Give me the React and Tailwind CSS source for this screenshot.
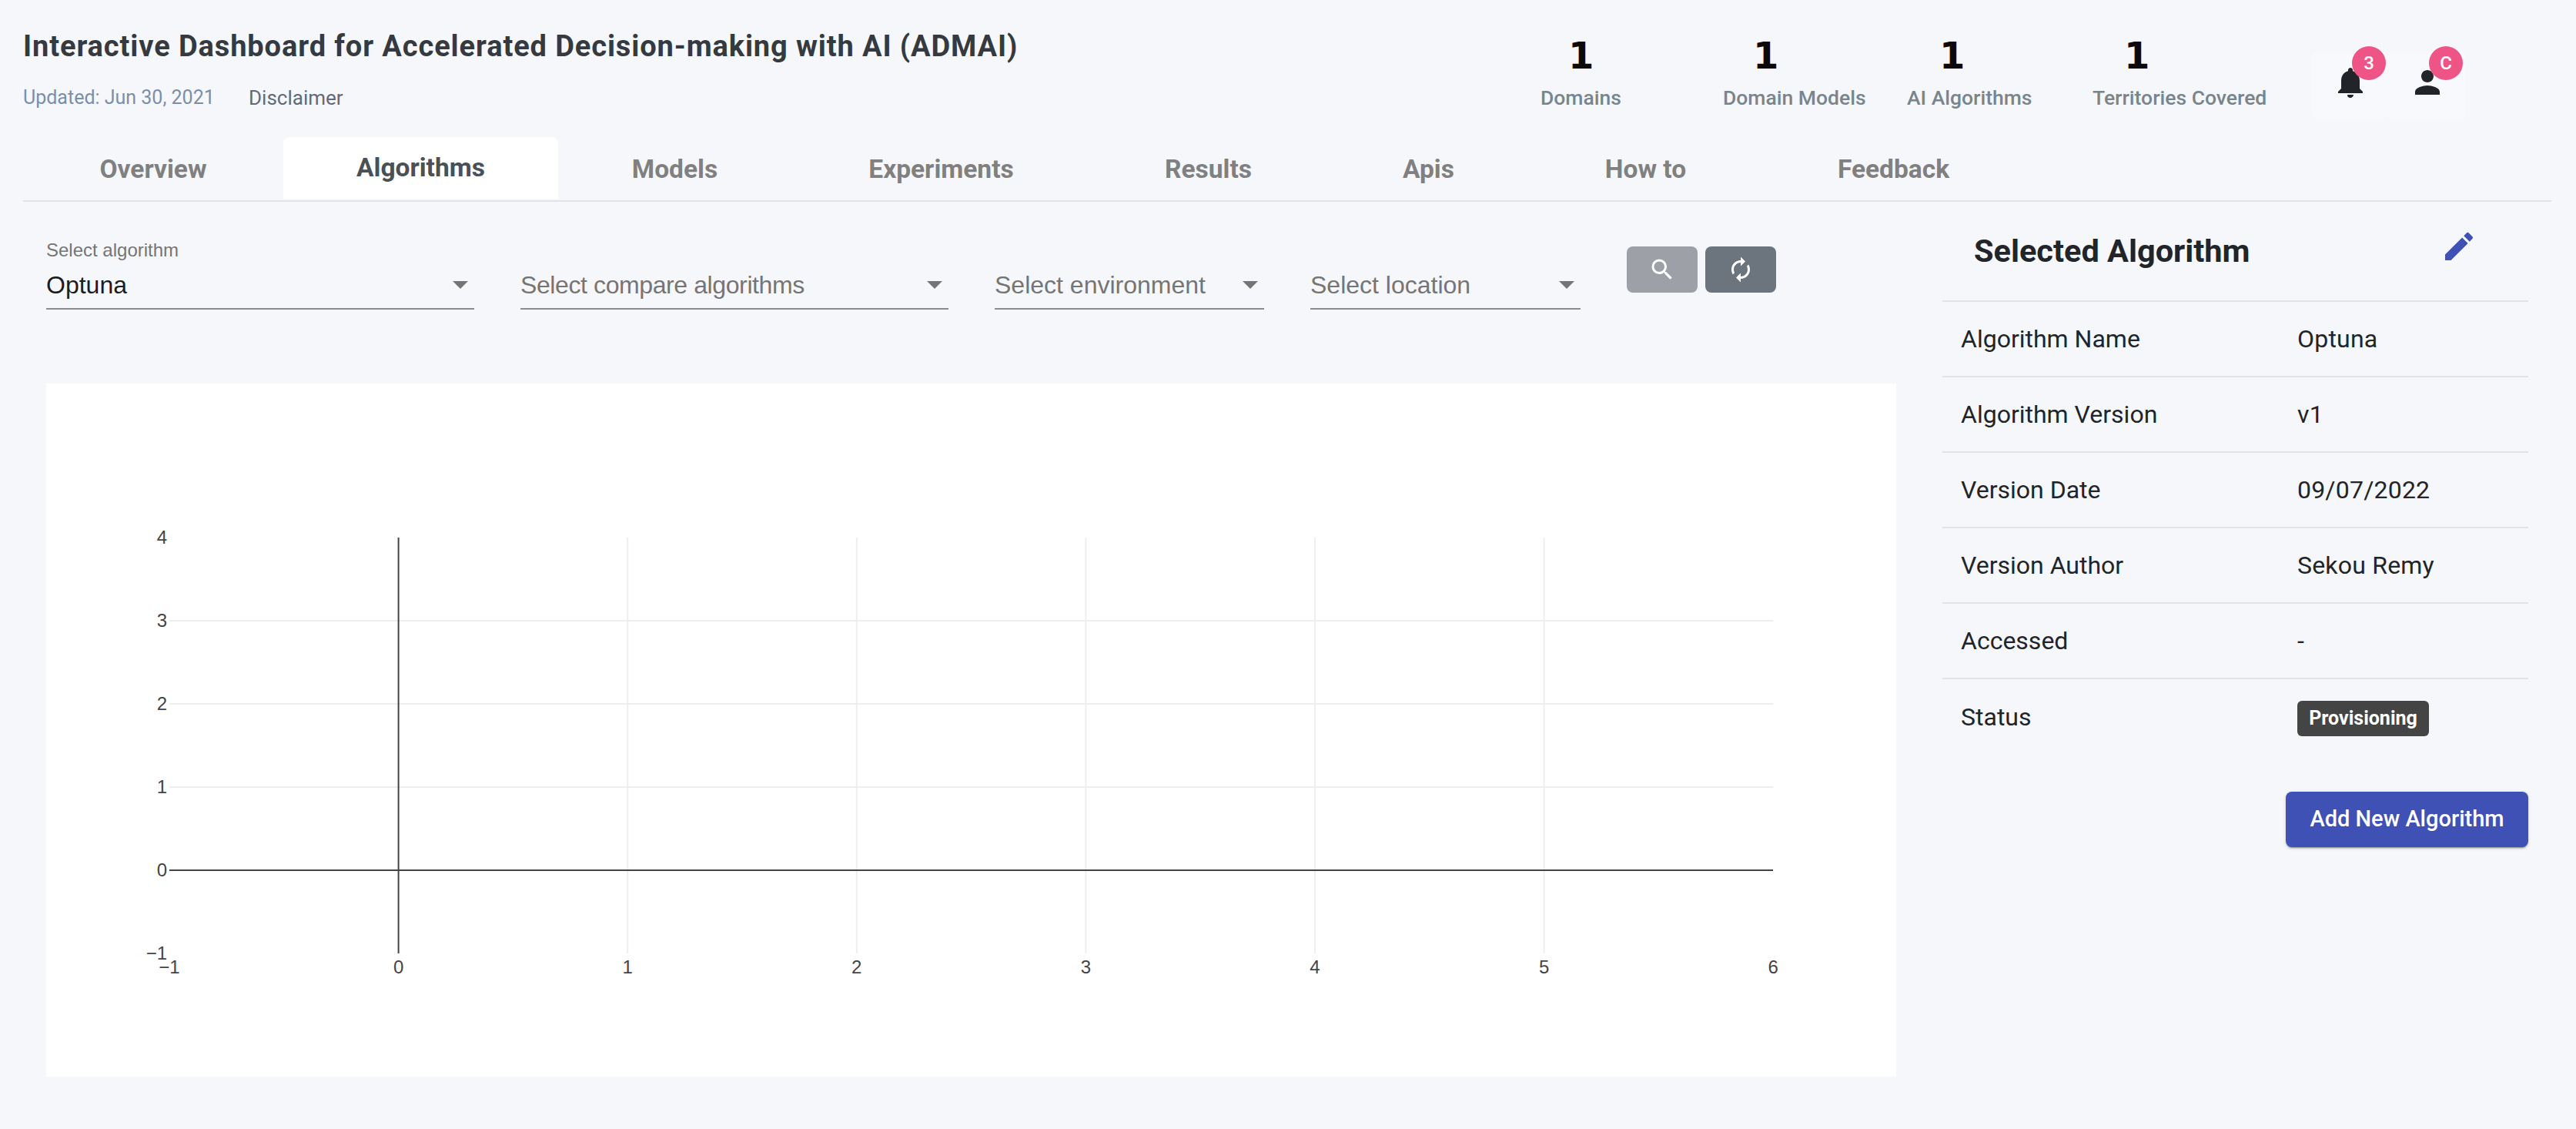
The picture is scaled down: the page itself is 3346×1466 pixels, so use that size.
import React from "react";
import { MdNotifications, MdPerson, MdEdit, MdSearch, MdAutorenew } from "react-icons/md";

const PLEX = "font-['Roboto','Noto_Sans',sans-serif]";
const HELV = "font-['Liberation_Sans',Arial,sans-serif]";

const stats = [
  { label: "Domains", w: "w-[237px]", ml: "ml-[36px]" },
  { label: "Domain Models", w: "w-[239px]", ml: "ml-[39px]" },
  { label: "AI Algorithms", w: "w-[241px]", ml: "ml-[42px]" },
  { label: "Territories Covered", w: "w-[285px]", ml: "ml-[41px]" },
];

const tabs = [
  { label: "Overview", w: "w-[338px]" },
  { label: "Algorithms", w: "w-[357px]", active: true },
  { label: "Models", w: "w-[303px]" },
  { label: "Experiments", w: "w-[389px]" },
  { label: "Results", w: "w-[305px]" },
  { label: "Apis", w: "w-[267px]" },
  { label: "How to", w: "w-[297px]" },
  { label: "Feedback", w: "w-[347px]" },
];

const rows = [
  ["Algorithm Name", "Optuna"],
  ["Algorithm Version", "v1"],
  ["Version Date", "09/07/2022"],
  ["Version Author", "Sekou Remy"],
  ["Accessed", "-"],
];

function Caret() {
  return <span className="mr-[8px] h-0 w-0 border-x-[10px] border-t-[10px] border-x-transparent border-t-[#757575]" />;
}

function Select({ label, value, w, ml }) {
  return (
    <div className={`${w} ${ml} shrink-0 ${HELV}`}>
      <div className="h-[34px] text-[24px] leading-[34px] text-[#757575]">{label}</div>
      <div className="mt-[6px] flex h-[54px] items-center justify-between border-b-2 border-[#8c8c8c] pb-[8px]">
        <span className="text-[32px] leading-[44px] text-[#1c1c1c]">{value}</span>
        <Caret />
      </div>
    </div>
  );
}

function PlaceholderSelect({ text, w, ml, track = "" }) {
  return (
    <div className={`${w} ${ml} shrink-0 ${HELV}`}>
      <div className="mt-[40px] flex h-[54px] items-center justify-between border-b-2 border-[#8c8c8c] pb-[8px]">
        <span className={`text-[32px] leading-[44px] text-[#757575] ${track}`}>{text}</span>
        <Caret />
      </div>
    </div>
  );
}

function Chart() {
  const xs = [-1, 0, 1, 2, 3, 4, 5, 6];
  const ys = [4, 3, 2, 1, 0, -1];
  const X = (v) => 457.6 + v * 297.6;
  const Y = (v) => 632 - v * 108;
  return (
    <svg width="2402" height="900" viewBox="0 0 2402 900" className="block">
      {[1, 2, 3, 4, 5].map((v) => (
        <line key={v} x1={X(v)} x2={X(v)} y1={200} y2={740} stroke="#eeeeee" strokeWidth="2" />
      ))}
      {[1, 2, 3].map((v) => (
        <line key={v} x1={160} x2={2243} y1={Y(v)} y2={Y(v)} stroke="#eeeeee" strokeWidth="2" />
      ))}
      <line x1={X(0)} x2={X(0)} y1={200} y2={740} stroke="#444444" strokeWidth="2" />
      <line x1={160} x2={2243} y1={Y(0)} y2={Y(0)} stroke="#444444" strokeWidth="2" />
      <g fontFamily="'Liberation Sans', Arial, sans-serif" fontSize="24" fill="#444444">
        {ys.map((v) => (
          <text key={v} x={157} y={Y(v) + 8} textAnchor="end">{v < 0 ? "\u2212" + -v : v}</text>
        ))}
        {xs.map((v) => (
          <text key={v} x={X(v)} y={766} textAnchor="middle">{v < 0 ? "\u2212" + -v : v}</text>
        ))}
      </g>
    </svg>
  );
}

export default function App() {
  return (
    <div className={`h-[1466px] w-[3346px] overflow-hidden bg-[#f6f7fb] ${PLEX}`}>
      <header className="flex h-[178px] pl-[30px]">
        <div className="w-[1971px] shrink-0">
          <h1 className="mt-[36px] whitespace-nowrap text-[38px] font-bold leading-[48px] tracking-[0.9px] text-[#343a40]">
            Interactive Dashboard for Accelerated Decision-making with AI (ADMAI)
          </h1>
          <div className="mt-[27px] flex text-[25px] leading-[32px]">
            <span className="w-[293px] text-[#7b8eaa]">Updated: Jun 30, 2021</span>
            <span className="text-[26px] text-[#5f6b76]">Disclaimer</span>
          </div>
        </div>
        <div className="flex">
          {stats.map((s) => (
            <div key={s.label} className={`${s.w} shrink-0`}>
              <div className={`${s.ml} mt-[44px] font-['DejaVu_Sans',sans-serif] text-[48px] font-bold leading-[56px] text-[#0a0a0a]`}>1</div>
              <div className="mt-[11px] whitespace-nowrap text-[26.5px] font-medium leading-[32px] text-[#78858c]">{s.label}</div>
            </div>
          ))}
          <div className="relative mt-[67px] flex h-[88px] w-[99px] shrink-0 justify-center rounded-[8px] bg-[#f8f9fc] pt-[16px]">
            <MdNotifications className="text-[48px] text-[#212529]" />
            <span className="absolute left-[52px] top-[-7px] flex h-[44px] w-[44px] items-center justify-center rounded-full bg-[#ee5586] text-[24px] font-medium text-white">3</span>
          </div>
          <div className="relative mt-[67px] flex h-[88px] w-[101px] shrink-0 justify-center rounded-[8px] bg-[#f8f9fc] pt-[16px]">
            <MdPerson className="text-[48px] text-[#212529]" />
            <span className="absolute left-[53px] top-[-7px] flex h-[44px] w-[44px] items-center justify-center rounded-full bg-[#ee5586] text-[24px] font-medium text-white">C</span>
          </div>
        </div>
      </header>

      <nav className="ml-[30px] flex h-[84px] w-[3284px] border-b-2 border-[#e1e3e8]">
        {tabs.map((t) => (
          <div
            key={t.label}
            className={
              t.active
                ? `${t.w} h-[80px] shrink-0 rounded-t-[8px] bg-white pt-[16px] text-center text-[33.5px] font-bold leading-[48px] text-[#495057]`
                : `${t.w} h-[80px] shrink-0 pt-[18px] text-center text-[33.5px] font-bold leading-[48px] text-[#808080]`
            }
          >
            {t.label}
          </div>
        ))}
      </nav>

      <main className="flex">
        <section className="ml-[60px] w-[2403px] shrink-0">
          <div className="mt-[46px] flex">
            <Select label="Select algorithm" value="Optuna" w="w-[556px]" ml="ml-0" />
            <PlaceholderSelect text="Select compare algorithms" w="w-[556px]" ml="ml-[60px]" track="tracking-[-0.4px]" />
            <PlaceholderSelect text="Select environment" w="w-[350px]" ml="ml-[60px]" />
            <PlaceholderSelect text="Select location" w="w-[351px]" ml="ml-[60px]" />
            <button className="ml-[60px] mt-[12px] flex h-[60px] w-[92px] items-center justify-center rounded-[8px] bg-[#9da1a7] text-white">
              <MdSearch className="text-[36px]" />
            </button>
            <button className="ml-[10px] mt-[12px] flex h-[60px] w-[92px] items-center justify-center rounded-[8px] bg-[#6c757d] text-white">
              <MdAutorenew className="text-[36px]" />
            </button>
          </div>
          <div className="mt-[96px] h-[900px] bg-white">
            <Chart />
          </div>
        </section>

        <aside className="ml-[60px] w-[761px] shrink-0">
          <div className="flex h-[130px] items-center border-b-2 border-[#e1e3e8] pl-[41px] pr-[66px]">
            <h2 className="text-[41.5px] font-bold leading-[48px] text-[#212529]">Selected Algorithm</h2>
            <MdEdit className="ml-auto mb-[12px] text-[48px] text-[#3f51b5]" />
          </div>
          {rows.map(([k, v]) => (
            <div key={k} className="flex h-[98px] items-center border-b-2 border-[#e1e3e8] pl-[24px] text-[32px] text-[#212529]">
              <span className="w-[437px] shrink-0">{k}</span>
              <span className="tracking-[0.2px]">{v}</span>
            </div>
          ))}
          <div className="flex h-[98px] items-center pl-[24px] text-[32px] text-[#212529]">
            <span className="w-[437px] shrink-0">Status</span>
            <span className="mt-[4px] flex h-[46px] w-[171px] items-center justify-center rounded-[6px] bg-[#444444] text-[25px] font-bold text-white">Provisioning</span>
          </div>
          <div className="mt-[48px] flex justify-end">
            <button className="h-[72px] w-[315px] rounded-[8px] bg-[#3f51b5] text-[29px] font-medium text-white shadow-[0_3px_1px_-2px_rgba(0,0,0,0.2),0_2px_2px_0_rgba(0,0,0,0.14),0_1px_5px_0_rgba(0,0,0,0.12)]">
              Add New Algorithm
            </button>
          </div>
        </aside>
      </main>
    </div>
  );
}
